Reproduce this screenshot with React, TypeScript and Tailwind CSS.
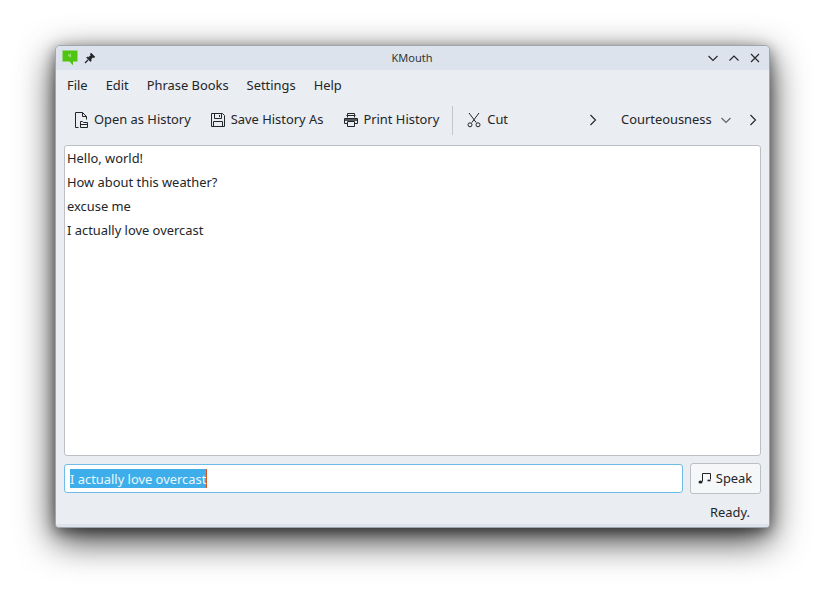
import React from "react";

const ink = "#232629";

function OpenIcon() {
  return (
    <svg width="16" height="16" viewBox="0 0 16 16" fill="none" stroke={ink} strokeWidth="1">
      <path d="M5.5 15.5H2.5V.5H9.5L13.5 4.5V7.5M9.5.5V4.5H13.5" />
      <path d="M7.5 15.5V9.5H9.5L10.5 10.5H14.5V15.5Z" />
      <path d="M7.5 12.5H14.5" />
    </svg>
  );
}
function SaveIcon() {
  return (
    <svg width="16" height="16" viewBox="0 0 16 16" fill="none" stroke={ink} strokeWidth="1">
      <path d="M1.5 1.5H12.5L14.5 3.5V14.5H1.5Z" />
      <path d="M4.5 1.5V6.5H11.5V1.5M9.5 3V5" />
      <path d="M3.5 14.5V9.5H12.5V14.5" />
    </svg>
  );
}
function PrintIcon() {
  return (
    <svg width="16" height="16" viewBox="0 0 16 16" fill="none" stroke={ink} strokeWidth="1">
      <path d="M4.5 5.5V1.5H11.5V5.5M3.5 3.5H12.5" />
      <path d="M4.5 11.5H1.5V6.5H14.5V11.5H11.5" />
      <path d="M4.5 9.5H11.5V14.5H4.5Z" />
      <path d="M2 8H14" strokeWidth="1.5" />
    </svg>
  );
}
function CutIcon() {
  return (
    <svg width="16" height="16" viewBox="0 0 16 16" fill="none" stroke={ink} strokeWidth="1">
      <path d="M3 1L10.2 10.6M13 1L5.8 10.6" />
      <circle cx="4" cy="12.8" r="2" />
      <circle cx="12" cy="12.8" r="2" />
    </svg>
  );
}
function Chevron({ dir, size = 12, color = ink }: { dir: "right" | "down" | "up"; size?: number; color?: string }) {
  const d = dir === "right" ? "M3.5 1L8.5 6L3.5 11" : dir === "down" ? "M1.5 4L6 8.5L10.5 4" : "M1.5 8.5L6 4L10.5 8.5";
  return (
    <svg width={size} height={size} viewBox="0 0 12 12" fill="none" stroke={color} strokeWidth="1.1">
      <path d={d} />
    </svg>
  );
}
function AppIcon() {
  return (
    <svg width="16" height="16" viewBox="0 0 16 16">
      <path d="M0.5 0.5H15.5V11.5H11V15.5L7.5 11.5H0.5Z" fill="#4fc411" />
      <path d="M6 4.5H7.5L9 3V8L7.5 6.5H6Z" fill="#8fe070" />
    </svg>
  );
}
function PinIcon() {
  return (
    <svg width="12" height="12" viewBox="0 0 12 12" fill={ink} stroke={ink} strokeWidth="0.6">
      <path d="M7 1L11 5L9.8 5.6L8.6 5.2L7 7.6L7.2 9L6.4 9.6L2.6 5.8L3.2 5L4.6 5.2L6.8 3.4L6.4 2.2Z" />
      <path d="M4 8L1 11" strokeWidth="1.2" />
    </svg>
  );
}
function SpeakIcon() {
  return (
    <svg width="14" height="14" viewBox="0 0 14 14" fill="none" stroke={ink} strokeWidth="1">
      <path d="M4.5 9.5V1.5H12.5V7.5" />
      <ellipse cx="2.5" cy="10" rx="2" ry="1.6" fill={ink} stroke="none" />
      <path d="M9.5 8.5H12.5" strokeWidth="1.6" />
    </svg>
  );
}

function ToolButton({ icon, label, className }: { icon: React.ReactNode; label: string; className: string }) {
  return (
    <div className={`flex items-center h-[30px] shrink-0 whitespace-nowrap ${className}`}>
      {icon}
      <span>{label}</span>
    </div>
  );
}

export default function App() {
  return (
    <div className="w-[825px] h-[593px] bg-white pl-[55px] pt-[45px] overflow-hidden font-['Noto_Sans',sans-serif] text-[12.9px] text-[#232629]">
      <div className="w-[715px] h-[483px] flex flex-col rounded-t-[5px] rounded-b-[4px] overflow-hidden bg-[#eaedf2] border border-[#a2a6ab] shadow-[0_12px_36px_rgba(0,0,0,0.8),0_4px_14px_rgba(0,0,0,0.45)]">
        <div className="h-[24px] shrink-0 flex items-center bg-[#dde3ec] pl-[6px] pr-[8px]">
          <AppIcon />
          <div className="ml-[6px]"><PinIcon /></div>
          <div className="flex-1 text-center text-[11px] text-[#31363b] pl-[21px]">KMouth</div>
          <div className="flex items-center gap-[9px]">
            <Chevron dir="down" />
            <Chevron dir="up" />
            <svg width="12" height="12" viewBox="0 0 12 12" fill="none" stroke={ink} strokeWidth="1.1">
              <path d="M2 2L10 10M10 2L2 10" />
            </svg>
          </div>
        </div>

        <div className="h-[32px] shrink-0 flex items-center pl-[11px] gap-[18px]">
          <span>File</span>
          <span>Edit</span>
          <span>Phrase Books</span>
          <span>Settings</span>
          <span>Help</span>
        </div>

        <div className="h-[36px] shrink-0 flex items-center pl-[17px] whitespace-nowrap">
          <ToolButton icon={<OpenIcon />} label="Open as History" className="gap-[5px]" />
          <ToolButton icon={<SaveIcon />} label="Save History As" className="gap-[5px] ml-[19px]" />
          <ToolButton icon={<PrintIcon />} label="Print History" className="gap-[4px] ml-[20px]" />
          <div className="w-[1px] h-[29px] bg-[#c3c7cc] ml-[13px]" />
          <ToolButton icon={<CutIcon />} label="Cut" className="gap-[5px] ml-[13px]" />
          <div className="ml-[79px]"><Chevron dir="right" size={12} /></div>
          <div className="ml-[22px]">Courteousness</div>
          <div className="ml-[8px]"><Chevron dir="down" size={12} color="#5c6166" /></div>
          <div className="ml-[15px]"><Chevron dir="right" size={12} /></div>
        </div>

        <div className="flex-1 flex flex-col pl-[8px] pr-[8px] pt-[7px] min-h-0">
          <div className="h-[311px] shrink-0 bg-white border border-[#bcbfc3] rounded-[3px] pl-[2px] leading-[24px]">
            <div>Hello, world!</div>
            <div>How about this weather?</div>
            <div>excuse me</div>
            <div>I actually love overcast</div>
          </div>

          <div className="flex gap-[7px] mt-[8px]">
            <div className="w-[620px] h-[29px] bg-white border border-[#6fbce8] rounded-[3px] flex items-center pl-[5px]">
              <span className="bg-[#3daee9] text-[#eaf6fd] h-[19px] leading-[20px] border-r border-[#d9531e]">I actually love overcast</span>
            </div>
            <div className="w-[71px] h-[31px] -mt-[1px] bg-[#f6f7f9] border border-[#bcbfc3] rounded-[3px] flex items-center justify-center gap-[4px] pr-[1px]">
              <SpeakIcon />
              <span>Speak</span>
            </div>
          </div>

          <div className="flex-1 flex items-center justify-end pr-[11px] pt-[8px]">Ready.</div>
        </div>
        <div className="h-[3px] shrink-0 bg-[#dde3ec]" />
      </div>
    </div>
  );
}
